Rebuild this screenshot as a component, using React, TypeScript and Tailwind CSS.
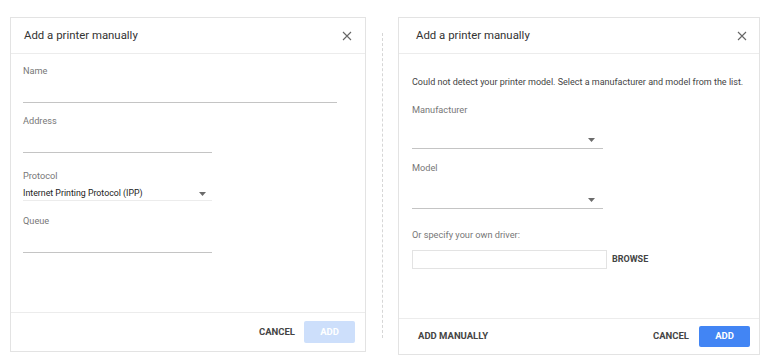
import React from "react";

function CloseIcon() {
  return (
    <svg width="10" height="10" viewBox="0 0 10 10" className="text-[#666]">
      <path d="M1 1L9 9M9 1L1 9" stroke="currentColor" strokeWidth="1.1" fill="none" />
    </svg>
  );
}

function Caret() {
  return (
    <svg width="7" height="4" viewBox="0 0 7 4" className="text-[#6b6b6b]">
      <path d="M0 0H7L3.5 4Z" fill="currentColor" />
    </svg>
  );
}

function DialogHeader({ pl, pr }: { pl: string; pr: string }) {
  return (
    <div className={`h-[36px] flex items-center justify-between border-b border-[#ececec] ${pl} ${pr}`}>
      <span className="text-[11.4px] text-[#333]">Add a printer manually</span>
      <CloseIcon />
    </div>
  );
}

function TextField({ label, width, mt }: { label: string; width: string; mt: string }) {
  return (
    <div className={mt}>
      <div className="text-[9.2px] leading-[12px] text-[#777]">{label}</div>
      <div className={`mt-[25px] border-b border-[#c4c4c4] ${width}`} />
    </div>
  );
}

function SelectField({ label, width, mt, gap }: { label: string; width: string; mt: string; gap: string }) {
  return (
    <div className={mt}>
      <div className="text-[9.2px] leading-[12px] text-[#777]">{label}</div>
      <div className={`${gap} h-[18px] flex items-center justify-end pr-[8px] border-b border-[#c4c4c4] ${width}`}>
        <Caret />
      </div>
    </div>
  );
}

export default function App() {
  return (
    <div
      className="w-[770px] h-[362px] bg-white flex items-start pt-[17px] pl-[10px] text-[#333]"
      style={{ fontFamily: "Roboto, 'Liberation Sans', sans-serif" }}
    >
      {/* Left dialog */}
      <div className="w-[356px] h-[335px] border border-[#e3e3e3] flex flex-col">
        <DialogHeader pl="pl-[13px]" pr="pr-[13px]" />
        <div className="flex-1 pl-[12px]">
          <TextField label="Name" width="w-[314px]" mt="mt-[11px]" />
          <TextField label="Address" width="w-[189px]" mt="mt-[12px]" />
          <div className="mt-[17px]">
            <div className="text-[9.2px] leading-[12px] text-[#777]">Protocol</div>
            <div className="mt-[5px] w-[189px] h-[14px] flex items-center justify-between pr-[6px] border-b border-[#ececec]">
              <span className="text-[8.8px] text-[#222]">Internet Printing Protocol (IPP)</span>
              <Caret />
            </div>
          </div>
          <TextField label="Queue" width="w-[189px]" mt="mt-[14px]" />
        </div>
        <div className="h-[39px] border-t border-[#ececec] flex items-center justify-end gap-[9px] pr-[10px]">
          <span className="text-[9.5px] font-bold text-[#444]">CANCEL</span>
          <div className="w-[51px] h-[22px] rounded-[2px] bg-[#cddffb] flex items-center justify-center text-[9.5px] font-bold text-white">
            ADD
          </div>
        </div>
      </div>

      {/* Dashed separator */}
      <div className="ml-[16px] mt-[16px] h-[305px] border-l border-dashed border-[#d6d6d6]" />

      {/* Right dialog */}
      <div className="ml-[15px] w-[362px] h-[338px] border border-[#e3e3e3] flex flex-col">
        <DialogHeader pl="pl-[17px]" pr="pr-[12px]" />
        <div className="flex-1 pl-[13px]">
          <div className="mt-[22px] text-[9px] leading-[12px] text-[#444] whitespace-nowrap">
            Could not detect your printer model. Select a manufacturer and model from the list.
          </div>
          <SelectField label="Manufacturer" width="w-[191px]" mt="mt-[16px]" gap="mt-[15px]" />
          <SelectField label="Model" width="w-[191px]" mt="mt-[13px]" gap="mt-[17px]" />
          <div className="mt-[20px] text-[9.2px] leading-[12px] text-[#777]">Or specify your own driver:</div>
          <div className="mt-[9px] flex items-center gap-[5px]">
            <div className="w-[195px] h-[19px] border border-[#e3e3e3]" />
            <span className="text-[9px] font-bold text-[#444]">BROWSE</span>
          </div>
        </div>
        <div className="h-[36px] border-t border-[#ececec] flex items-center pl-[19px] pr-[9px]">
          <span className="text-[9.5px] font-bold text-[#444]">ADD MANUALLY</span>
          <span className="ml-auto text-[9.5px] font-bold text-[#444]">CANCEL</span>
          <div className="ml-[10px] w-[51px] h-[21px] rounded-[2px] bg-[#4285f4] flex items-center justify-center text-[9.5px] font-bold text-white">
            ADD
          </div>
        </div>
      </div>
    </div>
  );
}
